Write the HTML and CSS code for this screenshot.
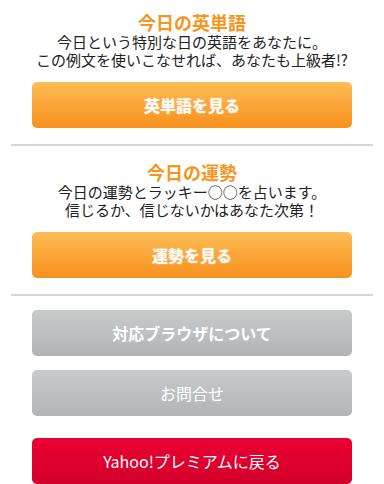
FILE: index.html
```html
<!DOCTYPE html>
<html lang="ja">
<head>
<meta charset="utf-8">
<link rel="stylesheet" href="styles.css">
</head>
<body>
<div class="page">
  <section class="block first">
    <h2 class="title">今日の英単語</h2>
    <p class="desc">今日という特別な日の英語をあなたに。<br>この例文を使いこなせれば、あなたも上級者!?</p>
    <a class="btn orange">英単語を見る</a>
  </section>
  <hr class="divider">
  <section class="block">
    <h2 class="title">今日の運勢</h2>
    <p class="desc">今日の運勢とラッキー○○を占います。<br>信じるか、信じないかはあなた次第！</p>
    <a class="btn orange">運勢を見る</a>
  </section>
  <hr class="divider">
  <nav class="links">
    <a class="btn gray bold">対応ブラウザについて</a>
    <a class="btn gray">お問合せ</a>
    <a class="btn red">Yahoo!プレミアムに戻る</a>
  </nav>
</div>
</body>
</html>
```
FILE: styles.css
```css
html, body {
  margin: 0;
  padding: 0;
  background: #fff;
}
body {
  font-family: "Noto Sans CJK JP", "Noto Sans", sans-serif;
  color: #222;
  width: 384px;
  overflow: hidden;
}
.page {
  display: flex;
  flex-direction: column;
}
.block {
  display: flex;
  flex-direction: column;
  align-items: center;
  padding: 16px 32px 16px;
}
.block.first {
  padding-top: 12px;
}
.title {
  margin: 0;
  font-size: 18px;
  line-height: 21px;
  font-weight: bold;
  color: #f7941d;
}
.desc {
  margin: 0;
  font-size: 15px;
  line-height: 18px;
  text-align: center;
  color: #222;
}
.btn {
  display: flex;
  align-items: center;
  justify-content: center;
  box-sizing: border-box;
  width: 320px;
  height: 46px;
  border-radius: 5px;
  color: #fff;
  font-size: 16px;
  text-decoration: none;
}
.block .btn {
  margin-top: 13px;
}
.orange {
  background: linear-gradient(to bottom, #fdbe55 0%, #faa73c 45%, #f7921c 100%);
  font-weight: bold;
  text-shadow: 0 0 2px rgba(255, 255, 255, 0.6);
}
.gray {
  background: linear-gradient(to bottom, #c9cacc 0%, #b3b4b6 100%);
}
.gray.bold {
  font-weight: bold;
}
.red {
  background: linear-gradient(to bottom, #ea0032 0%, #d2002a 100%);
}
.divider {
  margin: 0 11px;
  height: 2px;
  border: 0;
  background: #d6d6d6;
}
.links {
  display: flex;
  flex-direction: column;
  align-items: center;
  padding-top: 14px;
  gap: 14px;
}
.links .red {
  margin-top: 8px;
}
```
